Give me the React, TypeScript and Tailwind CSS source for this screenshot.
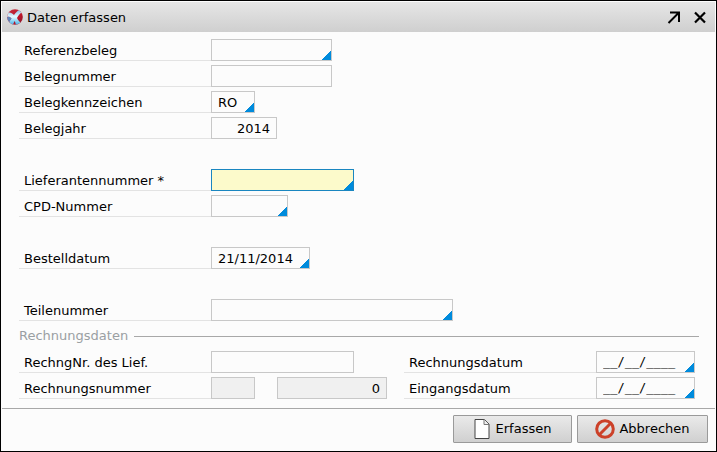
import { useState } from "react";
import type { ReactNode } from "react";

type FieldProps = {
  id: string;
  label?: string;
  title?: string;
  width: string;
  value?: string;
  align?: "left" | "right";
  lookup?: boolean;
  required?: boolean;
  disabled?: boolean;
  mask?: boolean;
};

function Field({
  id,
  title,
  width,
  value = "",
  align = "left",
  lookup,
  required,
  disabled,
  mask,
}: FieldProps) {
  const [text, setText] = useState(value);

  let colors = "border-[#c8c8c8] bg-[#fcfcfc]";
  if (required) colors = "border-[#1a86c0] bg-[#fcfacb]";
  if (disabled) colors = "border-[#c8c8c8] bg-[#f0f0f0]";

  return (
    <div className={`relative h-[22px] ${width}`}>
      <input
        id={id}
        aria-label={title}
        value={text}
        required={required}
        disabled={disabled}
        onChange={(e) => setText(e.target.value)}
        className={`block h-full w-full border px-1.5 outline-none ${colors} ${
          align === "right" ? "text-right" : ""
        } ${mask ? "font-['DejaVu_Sans_Mono',monospace] text-[12px]" : ""}`}
      />
      {lookup && (
        <svg
          className="pointer-events-none absolute right-px bottom-px size-[9px]"
          viewBox="0 0 9 9"
          shapeRendering="crispEdges"
          aria-hidden="true"
        >
          <path d="M9 -1V9H-1Z" fill="#008bdc" />
        </svg>
      )}
    </div>
  );
}

function Row({ id, label, children }: { id: string; label: string; children: ReactNode }) {
  return (
    <div className="flex">
      <label
        htmlFor={id}
        className="h-[22px] w-48 shrink-0 border-b border-[#e3e3e3] pl-[5px] leading-6"
      >
        {label}
      </label>
      {children}
    </div>
  );
}

function LabeledField(props: FieldProps & { label: string }) {
  return (
    <Row id={props.id} label={props.label}>
      <Field {...props} />
    </Row>
  );
}

function Logo() {
  return (
    <svg viewBox="0 0 16 16" className="size-4" aria-hidden="true">
      <defs>
        <clipPath id="ball">
          <circle cx="8" cy="8" r="7.8" />
        </clipPath>
        <linearGradient id="red" x1="0" y1="0" x2="1" y2="1">
          <stop offset="0" stopColor="#c03040" />
          <stop offset="0.6" stopColor="#c0182c" />
          <stop offset="1" stopColor="#7d1428" />
        </linearGradient>
        <linearGradient id="blue" x1="0" y1="0" x2="0" y2="1">
          <stop offset="0" stopColor="#8cc0e4" />
          <stop offset="0.45" stopColor="#e8faff" />
          <stop offset="1" stopColor="#3cb0e8" />
        </linearGradient>
      </defs>
      <g clipPath="url(#ball)">
        <rect width="16" height="16" fill="url(#red)" />
        <path
          d="M0 4C3 3 5 4 7 6C8.500 4 10 2 12 1L15 3C12.500 5 11 7 10 9C11 11 12.500 12.500 13.500 14L9 16L7.800 12C7 13 6.500 14 6 16L1.500 14C2.500 12 3.500 10.500 4.500 9.500C3 8 2 7.500 0 8Z"
          fill="url(#blue)"
        />
        <path d="M0 8C2 7.500 3 8 4.500 9.500C3.500 10.500 2.500 12 1.500 14L0 12Z" fill="#5f86bc" />
      </g>
    </svg>
  );
}

export default function App() {
  return (
    <div className="flex min-h-screen flex-col border border-black bg-[#fcfcfc] p-px font-['DejaVu_Sans',Verdana,sans-serif] text-[13px] text-black">

      <header className="flex h-[30px] items-center bg-linear-to-b from-[#e6e6e6] to-[#cfcfcf] pr-2 pl-[5px]">
        <Logo />
        <h1 className="ml-1 flex-1 pt-0.5">Daten erfassen</h1>
        <div className="flex gap-3">
          <button type="button" aria-label="Maximieren">
            <svg viewBox="0 0 14 14" className="size-3.5" fill="none" stroke="#000" strokeWidth="2">
              <path d="M3 2.500H12V12M12 2.500L1.500 13" />
            </svg>
          </button>
          <button type="button" aria-label="Schließen">
            <svg viewBox="0 0 14 14" className="size-3.5" fill="none" stroke="#000" strokeWidth="2.200">
              <path d="M2 2.500L12 12.500M12 2.500L2 12.500" />
            </svg>
          </button>
        </div>
      </header>

      <form
        className="flex flex-1 flex-col"
        onSubmit={(e) => e.preventDefault()}
      >
        <div className="flex flex-1 flex-col gap-[30px] pt-[7px] pr-4 pb-2 pl-[17px]">

          <div className="space-y-1">
            <LabeledField id="referenzbeleg" label="Referenzbeleg" width="w-[121px]" lookup />
            <LabeledField id="belegnummer" label="Belegnummer" width="w-[121px]" />
            <LabeledField id="kennzeichen" label="Belegkennzeichen" width="w-11" value="RO" lookup />
            <LabeledField id="belegjahr" label="Belegjahr" width="w-[66px]" value="2014" align="right" />
          </div>

          <div className="space-y-1">
            <LabeledField id="lieferant" label="Lieferantennummer *" width="w-[143px]" lookup required />
            <LabeledField id="cpd" label="CPD-Nummer" width="w-[77px]" lookup />
          </div>

          <LabeledField id="bestelldatum" label="Bestelldatum" width="w-[99px]" value="21/11/2014" lookup />

          <div className="space-y-1">
            <LabeledField id="teilenummer" label="Teilenummer" width="w-[242px]" lookup />

            <div className="flex h-[22px] items-center gap-1.5">
              <h2 className="text-[#9a9fa3]">Rechnungsdaten</h2>
              <hr className="flex-1 border-[#a8a8a8]" />
            </div>

            <div className="flex justify-between pr-1">
              <div className="space-y-1">
                <LabeledField id="rechngnr" label="RechngNr. des Lief." width="w-[143px]" />
                <Row id="rechnungsnummer" label="Rechnungsnummer">
                  <Field id="rechnungsnummer" width="w-11 mr-[22px]" disabled />
                  <Field id="laufnummer" title="Laufnummer" width="w-[110px]" value="0" align="right" disabled />
                </Row>
              </div>
              <div className="space-y-1">
                <LabeledField id="rechnungsdatum" label="Rechnungsdatum" width="w-[99px]" value="__/__/____" lookup mask />
                <LabeledField id="eingangsdatum" label="Eingangsdatum" width="w-[99px]" value="__/__/____" lookup mask />
              </div>
            </div>
          </div>

        </div>

        <footer className="flex justify-end gap-[5px] border-t border-[#a8a8a8] px-[7px] pt-1.5 pb-[7px]">
          <button
            type="submit"
            className="flex h-7 w-[119px] items-center justify-center gap-1.5 rounded-[1px] border border-[#9a9a9a] bg-linear-to-b from-[#eaeaea] to-[#d0d0d0]"
          >
            <svg viewBox="0 0 16 20" className="h-5 w-4" aria-hidden="true">
              <path d="M1 .5H10.500L15 5V19.500H1Z" fill="#fff" stroke="#444" />
              <path d="M10 .5V5.500H15" fill="#eee" stroke="#777" />
            </svg>
            Erfassen
          </button>
          <button
            type="button"
            className="flex h-7 w-[131px] items-center justify-center gap-1 rounded-[1px] border border-[#9a9a9a] bg-linear-to-b from-[#eaeaea] to-[#d0d0d0]"
          >
            <svg viewBox="0 0 20 20" className="size-5" fill="none" stroke="#cc4129" strokeWidth="3" aria-hidden="true">
              <circle cx="10" cy="10" r="8.300" />
              <path d="M4.300 15.700L15.700 4.300" />
            </svg>
            Abbrechen
          </button>
        </footer>
      </form>

    </div>
  );
}
